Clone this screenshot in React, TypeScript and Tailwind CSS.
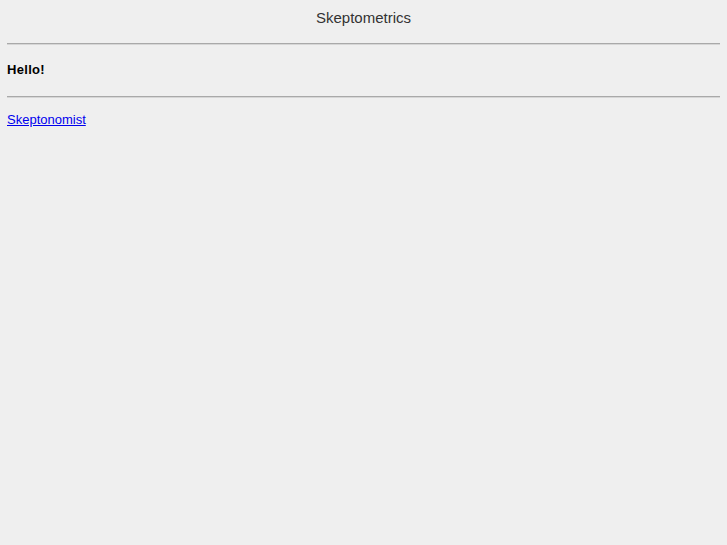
import React from "react";

export default function App() {
  return (
    <div
      className="min-h-[545px] w-full bg-[#efefef] px-[7px] text-black"
      style={{ fontFamily: '"Liberation Sans", Arial, sans-serif' }}
    >
      <div className="pt-[8px] text-center text-[15px] leading-[20px] text-[#333]">
        Skeptometrics
      </div>
      <div className="mt-[15px] h-[2px] border-t border-b border-t-[#a9a9a9] border-b-[#d6d6d6]" />
      <div className="pt-[15px] text-[13px] font-bold leading-[20px] tracking-[0.3px]">Hello!</div>
      <div className="mt-[16px] h-[2px] border-t border-b border-t-[#a9a9a9] border-b-[#d6d6d6]" />
      <div className="pt-[14px] text-[13px] leading-[16px]">
        <a href="#" className="text-[#0000ee] underline">
          Skeptonomist
        </a>
      </div>
    </div>
  );
}
